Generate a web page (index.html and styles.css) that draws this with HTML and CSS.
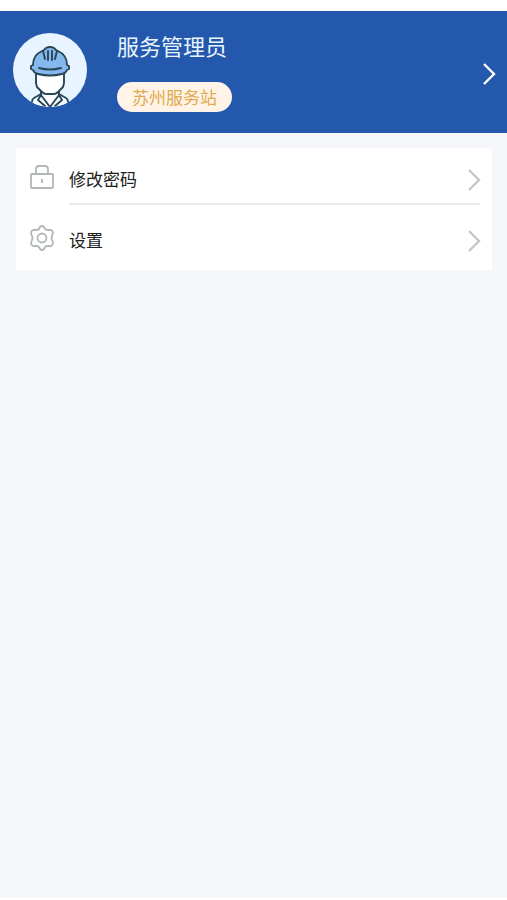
FILE: index.html
```html
<!DOCTYPE html>
<html lang="zh-CN">
<head>
<meta charset="utf-8">
<meta name="viewport" content="width=device-width, initial-scale=1">
<title>服务管理员</title>
<link rel="stylesheet" href="styles.css">
</head>
<body>
<main class="page">
  <a class="profile" href="#profile">
    <svg class="avatar" viewBox="0 0 74 74" aria-hidden="true">
      <defs><clipPath id="avatar-clip"><circle cx="37" cy="37" r="37"/></clipPath></defs>
      <circle cx="37" cy="37" r="37" fill="#e8f4ff"/>
      <g clip-path="url(#avatar-clip)" stroke="#294655" stroke-width="1.9" stroke-linecap="round" stroke-linejoin="round">
        <path d="M19 77V69q0-3 2-4l7-4h18l7 4q2 1 2 4v8z" fill="#f6fbff"/>
        <path d="M29 57h16v5l-8 12-8-12z" fill="#fff" stroke="none"/>
        <path d="M28 57v5l9 12 9-12v-5M28 62l-3 5 7 6M46 62l3 5-7 6" fill="none"/>
        <path d="M23 40v10l1 4 5 5q2 2 4 2h8q2 0 4-2l5-5 1-4V40z" fill="#fff"/>
        <path d="M20 32q0-10 9-14l2-1 2-2q4-2 8 0l2 2 2 1q9 4 9 14l2 1v3l-2 1q-1 3-5 4-12 3-24 0-4-1-5-4l-2-1v-3z" fill="#85b9ee"/>
        <path d="M30 18l2 8M44 18l-2 8M35 18v9M39 18v9M26 35q11 3 22 0" fill="none"/>
      </g>
    </svg>
    <div class="identity">
      <h1 class="name">服务管理员</h1>
      <span class="station">苏州服务站</span>
    </div>
    <svg class="chevron" viewBox="0 0 14 24" aria-hidden="true"><path d="M2 2l10 10L2 22"/></svg>
  </a>
  <nav class="menu">
    <a class="item" href="#password">
      <svg class="icon" viewBox="0 0 26 26" aria-hidden="true">
        <rect x="2" y="10" width="22" height="14" rx="1"/>
        <path d="M7 10V5q0-3 3-3h6q3 0 3 3v5M13 15v4M12 16h1"/>
      </svg>
      <span class="label">修改密码</span>
      <svg class="chevron" viewBox="0 0 14 24" aria-hidden="true"><path d="M2 2l10 10L2 22"/></svg>
    </a>
    <a class="item" href="#settings">
      <svg class="icon" viewBox="0 0 26 26" aria-hidden="true">
        <path d="M11 2q2-2 4 0l1 2q1 1 3 1h3q2 1 2 3l-1 3q-1 2 0 4l1 3q0 2-2 3h-3q-2 0-3 1l-1 2q-2 2-4 0l-1-2q-1-1-3-1H4q-2-1-2-3l1-3q1-2 0-4L2 8q0-2 2-3h3q2 0 3-1z"/>
        <circle cx="13" cy="13" r="4.500"/>
      </svg>
      <span class="label">设置</span>
      <svg class="chevron" viewBox="0 0 14 24" aria-hidden="true"><path d="M2 2l10 10L2 22"/></svg>
    </a>
  </nav>
</main>
</body>
</html>
```
FILE: styles.css
```css
* {
  box-sizing: border-box;
}

body {
  margin: 0;
  background: #fff;
  font-family: "Noto Sans CJK SC", sans-serif;
}

.page {
  display: flex;
  flex-direction: column;
  min-height: 100vh;
  border-top: 11px solid #fff;
  border-bottom: 2px solid #fff;
  background: #f5f7fb;
}

a {
  color: inherit;
  text-decoration: none;
}

.profile {
  display: flex;
  align-items: center;
  padding: 17px 11px 21px 13px;
  background: #2458ac;
  color: #e8f5ff;
}

.avatar {
  flex: none;
  width: 74px;
  height: 74px;
}

.identity {
  display: flex;
  flex: 1;
  flex-direction: column;
  align-items: flex-start;
  gap: 20px;
  margin-left: 30px;
}

.name {
  margin: 0;
  font-size: 22px;
  font-weight: 400;
  line-height: 34px;
}

.station {
  padding: 0 15px;
  border-radius: 15px;
  background: #fff4e7;
  color: #e2aa50;
  font-size: 17px;
  line-height: 30px;
}

.chevron {
  flex: none;
  width: 14px;
  height: 24px;
  fill: none;
  stroke: currentColor;
  stroke-width: 2.4;
}

.profile .chevron {
  margin-top: 8px;
  color: #fff;
}

.menu {
  margin: 15px 15px 0 16px;
  background: #fff;
}

.item {
  display: grid;
  grid-template-columns: 26px 1fr 14px;
  align-items: center;
  column-gap: 14px;
  height: 61px;
  padding: 0 11px 0 13px;
  position: relative;
}

.item + .item::before {
  content: "";
  position: absolute;
  top: -6px;
  right: 12px;
  left: 53px;
  height: 2px;
  background: #ebebed;
}

.icon {
  width: 26px;
  height: 26px;
  margin-bottom: 4px;
  fill: none;
  stroke: #b2b7ba;
  stroke-width: 1.8;
  stroke-linejoin: round;
}

.label {
  color: #202020;
  font-size: 17px;
  line-height: 26px;
}

.item .chevron {
  margin-top: 2px;
  color: #c6c6c8;
}
```
